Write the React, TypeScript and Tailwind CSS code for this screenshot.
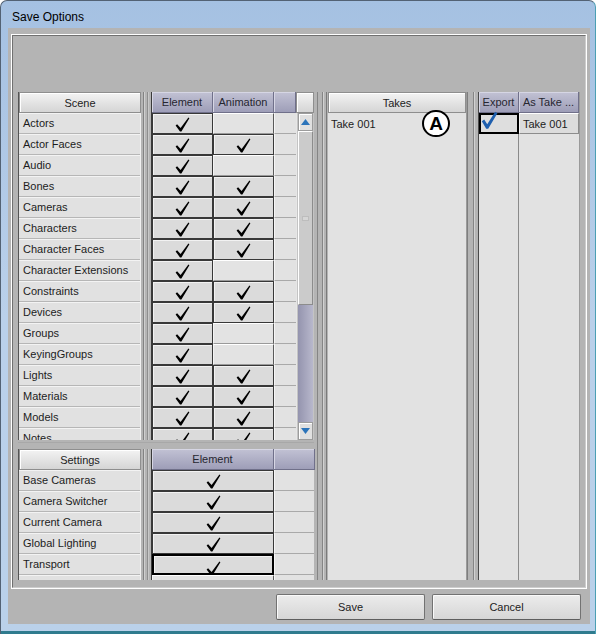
import React from "react";

type SceneRow = { name: string; element: boolean; animation: boolean };

const SCENE_ROWS: SceneRow[] = [
  { name: "Actors", element: true, animation: false },
  { name: "Actor Faces", element: true, animation: true },
  { name: "Audio", element: true, animation: false },
  { name: "Bones", element: true, animation: true },
  { name: "Cameras", element: true, animation: true },
  { name: "Characters", element: true, animation: true },
  { name: "Character Faces", element: true, animation: true },
  { name: "Character Extensions", element: true, animation: false },
  { name: "Constraints", element: true, animation: true },
  { name: "Devices", element: true, animation: true },
  { name: "Groups", element: true, animation: false },
  { name: "KeyingGroups", element: true, animation: false },
  { name: "Lights", element: true, animation: true },
  { name: "Materials", element: true, animation: true },
  { name: "Models", element: true, animation: true },
  { name: "Notes", element: true, animation: true },
];

const SETTINGS_ROWS = [
  "Base Cameras",
  "Camera Switcher",
  "Current Camera",
  "Global Lighting",
  "Transport",
  "",
];

function Check() {
  return (
    <svg width="15" height="15" viewBox="0 0 15 15">
      <path d="M0.6 8.4 L2.1 7.3 L5.6 11.1 L13.4 0.6 L14.4 1.3 L6.4 14.4 L5.0 14.4 Z" fill="#000" />
    </svg>
  );
}

function BlueCheck() {
  return (
    <svg width="17" height="19" viewBox="0 0 17 19">
      <path d="M0.8 10.2 L3.2 8.6 L6.2 13.2 L14.2 0.8 L16.4 2.2 L7.2 17.8 L5.2 17.8 Z" fill="#1f5fae" />
    </svg>
  );
}

function Arrow({ down }: { down?: boolean }) {
  return (
    <svg width="9" height="6" viewBox="0 0 9 6">
      <path d={down ? "M0 0 L9 0 L4.5 6 Z" : "M0 6 L9 6 L4.5 0 Z"} fill="#2b74ba" />
    </svg>
  );
}

function GrayHeader({ children, className = "" }: { children?: React.ReactNode; className?: string }) {
  return (
    <div
      className={`h-[21px] shrink-0 flex items-center justify-center pt-[1px] border border-[#8e8e8e] bg-gradient-to-b from-[#f3f3f3] to-[#d5d5d5] shadow-[inset_1px_1px_0_#ffffff] text-[#222] ${className}`}
    >
      {children}
    </div>
  );
}

function PurpleHeader({ children, className = "" }: { children?: React.ReactNode; className?: string }) {
  return (
    <div
      className={`h-[21px] shrink-0 flex items-center justify-center pt-[1px] border-r border-b border-[#70708a] bg-gradient-to-b from-[#c2c2d4] to-[#9e9eb8] shadow-[inset_1px_1px_0_#d6d6e4] text-[#262630] whitespace-nowrap overflow-hidden ${className}`}
    >
      {children}
    </div>
  );
}

function CheckCell({ on, className = "" }: { on: boolean; className?: string }) {
  if (on) {
    return (
      <div
        className={`h-full shrink-0 flex items-center justify-center pt-[1px] bg-[#dbdbdb] border border-[#383838] shadow-[inset_1px_1px_0_#f2f2f2] ${className}`}
      >
        <Check />
      </div>
    );
  }
  return (
    <div
      className={`h-full shrink-0 bg-[#e3e3e3] border border-t-white border-l-[#f4f4f4] border-r-[#5a5a5a] border-b-[#9a9a9a] ${className}`}
    />
  );
}

function NameTable({ title, rows }: { title: string; rows: string[] }) {
  return (
    <div className="w-[123px] h-full flex flex-col border-l border-[#555]">
      <GrayHeader>{title}</GrayHeader>
      <div className="flex-1 min-h-0 overflow-hidden bg-[#e1e1e1] border-r border-[#f0f0f0]">
        {rows.map((name, i) => (
          <div
            key={i}
            className="h-[21px] flex items-center pl-[4px] pt-[1px] border-b border-[#b6b6b6] shadow-[inset_0_1px_0_#f3f3f3] whitespace-nowrap"
          >
            {name}
          </div>
        ))}
      </div>
    </div>
  );
}

function LeftSplit() {
  return (
    <div className="w-[10px] h-full flex shrink-0">
      <div className="w-[2px]" />
      <div className="w-[1px] bg-[#828282]" />
      <div className="w-[1px] bg-[#cfcfcf]" />
      <div className="w-[2px]" />
      <div className="w-[1px] bg-[#8e8e8e]" />
      <div className="w-[1px] bg-[#c8c8c8]" />
    </div>
  );
}

function Scrollbar() {
  return (
    <div className="w-[18px] h-full flex flex-col px-[1px] bg-[#c4c4c4] border-l border-[#e6e6e6]">
      <div className="h-[18px] shrink-0 flex items-center justify-center bg-[#e0e0e0] border border-[#9c9c9c] shadow-[inset_1px_1px_0_#fff]">
        <Arrow />
      </div>
      <div className="h-[174px] shrink-0 flex items-center justify-center bg-[#cbcbcb] border border-t-white border-l-white border-r-[#8c8c8c] border-b-[#8c8c8c]">
        <div className="w-[7px] h-[5px] bg-[#d6d6d6] border border-[#bdbdbd]" />
      </div>
      <div className="flex-1 bg-gradient-to-r from-[#9494ae] to-[#b8b8cc]" />
      <div className="h-[18px] shrink-0 flex items-center justify-center bg-[#e0e0e0] border border-[#9c9c9c] shadow-[inset_1px_1px_0_#fff]">
        <Arrow down />
      </div>
    </div>
  );
}

function SceneGrid() {
  return (
    <div className="w-[163px] h-full flex flex-col border-l border-[#3a3a3a]">
      <div className="h-[21px] flex shrink-0">
        <PurpleHeader className="w-[61px]">Element</PurpleHeader>
        <PurpleHeader className="w-[61px]">Animation</PurpleHeader>
        <PurpleHeader className="w-[22px]" />
        <GrayHeader className="w-[18px]" />
      </div>
      <div className="flex-1 min-h-0 flex">
        <div className="w-[144px] h-full overflow-hidden">
          {SCENE_ROWS.map((r) => (
            <div key={r.name} className="h-[21px] flex">
              <CheckCell on={r.element} className="w-[61px]" />
              <CheckCell on={r.animation} className="w-[61px]" />
              <div className="w-[22px] h-full bg-[#e2e2e2] border-b border-[#a9a9a9] border-l border-l-[#f6f6f6]" />
            </div>
          ))}
        </div>
        <Scrollbar />
      </div>
    </div>
  );
}

function SettingsGrid() {
  return (
    <div className="w-[163px] h-full flex flex-col border-l border-[#3a3a3a]">
      <div className="h-[21px] flex shrink-0">
        <PurpleHeader className="w-[122px]">Element</PurpleHeader>
        <PurpleHeader className="w-[41px]" />
      </div>
      <div className="flex-1 min-h-0 overflow-hidden">
        {SETTINGS_ROWS.map((name, i) => (
          <div key={i} className="h-[21px] flex">
            {name === "Transport" ? (
              <div className="w-[122px] h-full shrink-0 flex items-end justify-center bg-[#dbdbdb] border-2 border-black shadow-[inset_1px_1px_0_#f2f2f2]">
                <div className="-mb-[3px]">
                  <Check />
                </div>
              </div>
            ) : name ? (
              <CheckCell on className="w-[122px]" />
            ) : (
              <CheckCell on={false} className="w-[122px]" />
            )}
            <div className="w-[41px] h-full bg-[#e2e2e2] border-b border-[#a9a9a9] border-l border-l-[#f6f6f6]" />
          </div>
        ))}
      </div>
    </div>
  );
}

function DialogButton({ children }: { children: React.ReactNode }) {
  return (
    <button
      type="button"
      className="w-[149px] h-[26px] flex items-center justify-center rounded-[2px] border border-[#727272] border-b-[#5e5e5e] bg-gradient-to-b from-[#ececec] to-[#d6d6d6] shadow-[inset_1px_1px_0_#fafafa] text-[#222]"
    >
      {children}
    </button>
  );
}

export default function App() {
  return (
    <div className="w-[598px] h-[634px] bg-white overflow-hidden font-['Liberation_Sans',Arial,sans-serif] text-[11px] text-[#1c1c1c]">
      <div className="w-[596px] h-[634px] flex flex-col rounded-t-[7px] border-t border-l border-r border-[#536274] border-r-[#4b9fb4] bg-gradient-to-b from-[#a5c1e2] via-[#bad0ea] to-[#bad1ea]">
        {/* Title bar */}
        <div className="h-[27px] shrink-0 flex items-center pl-[11px] pt-[5px] text-[12px] text-black">
          Save Options
        </div>

        {/* Client area */}
        <div className="ml-[7px] w-[582px] h-[596px] shrink-0 bg-[#b4b4b4] flex flex-col">
          <div className="ml-[3px] mt-[6px] w-[576px] h-[555px] border border-white">
            <div className="w-full h-full border border-t-[#707070] border-l-[#707070] border-r-[#cdcdcd] border-b-[#cdcdcd] pl-[5px] pt-[56px]">
              <div className="h-[488px] flex">
                {/* Scene / settings column */}
                <div className="w-[296px] h-full flex flex-col shrink-0">
                  <div className="h-[348px] flex shrink-0">
                    <NameTable title="Scene" rows={SCENE_ROWS.map((r) => r.name)} />
                    <LeftSplit />
                    <SceneGrid />
                  </div>
                  <div className="h-[9px] shrink-0 flex flex-col">
                    <div className="h-[2px]" />
                    <div className="h-[1px] bg-[#a8a8a8]" />
                  </div>
                  <div className="h-[131px] flex shrink-0">
                    <NameTable title="Settings" rows={SETTINGS_ROWS} />
                    <LeftSplit />
                    <SettingsGrid />
                  </div>
                </div>

                {/* Splitter */}
                <div className="w-[14px] h-full flex shrink-0">
                  <div className="w-[3px]" />
                  <div className="w-[1px] bg-[#858585]" />
                  <div className="w-[4px]" />
                  <div className="w-[1px] bg-[#858585]" />
                  <div className="w-[1px] bg-[#d2d2d2]" />
                  <div className="w-[2px]" />
                  <div className="w-[1px] bg-[#7a7a7a]" />
                </div>

                {/* Takes */}
                <div className="relative w-[139px] h-full flex flex-col shrink-0 border-r border-[#9a9a9a]">
                  <GrayHeader>Takes</GrayHeader>
                  <div className="flex-1 bg-[#e2e2e2]">
                    <div className="h-[21px] flex items-center pl-[3px] pt-[1px]">Take 001</div>
                  </div>
                  <div className="absolute left-[94px] top-[18px] w-[28px] h-[27px] rounded-full border-[2.5px] border-black bg-white flex items-center justify-center text-[19px] leading-none font-bold text-black">
                    A
                  </div>
                </div>

                {/* Splitter */}
                <div className="w-[11px] h-full flex shrink-0">
                  <div className="w-[1px] bg-[#7e7e7e]" />
                  <div className="w-[5px]" />
                  <div className="w-[1px] bg-[#858585]" />
                  <div className="w-[1px] bg-[#d2d2d2]" />
                </div>

                {/* Export */}
                <div className="w-[102px] h-full flex flex-col shrink-0 border-l border-[#4a4a4a] border-r border-r-[#9a9a9a]">
                  <div className="h-[21px] flex shrink-0">
                    <PurpleHeader className="w-[40px]">Export</PurpleHeader>
                    <PurpleHeader className="w-[60px]">As Take ...</PurpleHeader>
                  </div>
                  <div className="h-[21px] flex shrink-0">
                    <div className="w-[40px] h-full flex items-start border-2 border-black bg-[#dedede]">
                      <div className="-mt-[4px]">
                        <BlueCheck />
                      </div>
                    </div>
                    <div className="w-[60px] h-full flex items-center pl-[3px] pt-[1px] bg-[#dcdcdc] border border-t-white border-l-[#f4f4f4] border-r-[#8c8c8c] border-b-[#8c8c8c]">
                      Take 001
                    </div>
                  </div>
                  <div className="flex-1 flex">
                    <div className="w-[40px] h-full bg-[#e2e2e2] border-r border-[#8a8a8a]" />
                    <div className="flex-1 h-full bg-[#e2e2e2]" />
                  </div>
                </div>
              </div>
            </div>
          </div>

          {/* Buttons */}
          <div className="mt-[5px] mr-[9px] flex justify-end gap-[7px]">
            <DialogButton>Save</DialogButton>
            <DialogButton>Cancel</DialogButton>
          </div>
        </div>

        {/* Bottom frame */}
        <div className="flex-1 border-b-[3px] border-[#2f7b8e]" />
      </div>
    </div>
  );
}
